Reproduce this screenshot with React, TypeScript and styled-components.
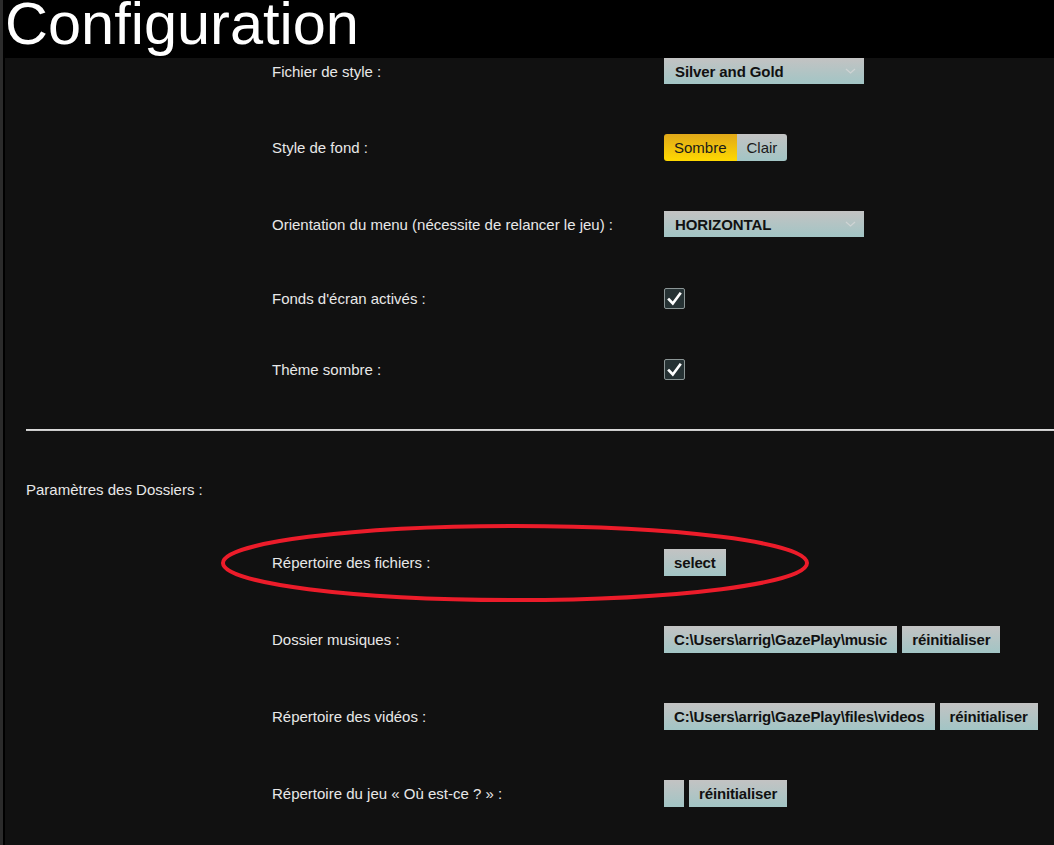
import styled, { createGlobalStyle, css } from "styled-components";

const GlobalStyle = createGlobalStyle`
  html, body {
    margin: 0;
    padding: 0;
    background: #111111;
  }
  body {
    font-family: "Liberation Sans", Arial, sans-serif;
  }
`;

const Page = styled.div`
  display: flex;
  min-height: 845px;
  background: #111111;
`;

const Rail = styled.div`
  width: 3px;
  flex: none;
  background: #2b2b2b;
  border-right: 2px solid #000;
`;

const Main = styled.div`
  flex: 1;
  display: flex;
  flex-direction: column;
  min-width: 0;
`;

const Header = styled.header`
  height: 58px;
  background: #000;
  overflow: hidden;
`;

const Title = styled.h1`
  margin: 0;
  font-size: 59.5px;
  font-weight: 400;
  line-height: 48px;
  color: #ffffff;
`;

const Content = styled.div`
  display: flex;
  flex-direction: column;
  gap: 50px;
  padding: 0 0 40px 21px;
`;

const Row = styled.div`
  position: relative;
  display: flex;
  align-items: center;
  margin-left: 246px;
`;

const Label = styled.div`
  width: 392px;
  flex: none;
  font-size: 15px;
  color: #e8e8e8;
`;

const SectionTitle = styled.div`
  font-size: 15px;
  line-height: 18px;
  color: #e8e8e8;
`;

const Separator = styled.div`
  height: 2px;
  background: linear-gradient(#e2e2e2, #c4c4c4);
`;

const silver = css`
  background: linear-gradient(#c3c3c3, #a2c5c5);
  color: #111;
  font-family: "Liberation Sans", Arial, sans-serif;
  font-size: 15px;
  border: none;
`;

const Combo = styled.div`
  ${silver};
  width: 200px;
  height: 26px;
  box-sizing: border-box;
  padding: 0 8px 0 11px;
  display: flex;
  align-items: center;
  justify-content: space-between;
  font-weight: 700;
  letter-spacing: -0.1px;
`;

const Toggle = styled.div`
  display: flex;
`;

const ToggleButton = styled.button<{ $active?: boolean }>`
  ${silver};
  height: 27px;
  padding: 0 10px;
  font-weight: 400;
  color: #1a1a1a;
  ${(p) =>
    p.$active &&
    css`
      background: linear-gradient(#e0a81a, #ffd900);
    `}
  &:first-child {
    border-radius: 3px 0 0 3px;
  }
  &:last-child {
    border-radius: 0 3px 3px 0;
  }
`;

const Buttons = styled.div`
  display: flex;
  gap: 5px;
`;

const PathButton = styled.button`
  ${silver};
  height: 27px;
  min-width: 20px;
  padding: 0 10px;
  font-weight: 700;
  letter-spacing: -0.15px;
`;

const Check = styled.div`
  width: 21px;
  height: 21px;
  box-sizing: border-box;
  border: 1px solid #8c9696;
  border-radius: 2px;
  background: #263234;
  display: flex;
  align-items: center;
  justify-content: center;
`;

const CheckRow = styled(Row)`
  margin-top: 1px;
  margin-bottom: -1px;
`;

const Ring = styled.svg`
  position: absolute;
  left: -52px;
  top: -26px;
  pointer-events: none;
  overflow: visible;
`;

const Chevron = () => (
  <svg width="11" height="6" viewBox="0 0 11 6">
    <path d="M1 1 L5.5 5 L10 1" fill="none" stroke="#cfd4d4" strokeWidth="1.2" />
  </svg>
);

const CheckBox = () => (
  <Check>
    <svg width="15" height="14" viewBox="0 0 15 14">
      <path
        d="M2 7.5 L5.8 11.5 L13 1.8"
        fill="none"
        stroke="#ffffff"
        strokeWidth="2.6"
        strokeLinecap="square"
      />
    </svg>
  </Check>
);

export default function App() {
  return (
    <>
      <GlobalStyle />
      <Page>
        <Rail />
        <Main>
          <Header>
            <Title>Configuration</Title>
          </Header>
          <Content>
            <Row>
              <Label>Fichier de style :</Label>
              <Combo>
                Silver and Gold
                <Chevron />
              </Combo>
            </Row>
            <Row>
              <Label>Style de fond :</Label>
              <Toggle>
                <ToggleButton $active>Sombre</ToggleButton>
                <ToggleButton>Clair</ToggleButton>
              </Toggle>
            </Row>
            <Row>
              <Label>Orientation du menu (nécessite de relancer le jeu) :</Label>
              <Combo>
                HORIZONTAL
                <Chevron />
              </Combo>
            </Row>
            <CheckRow>
              <Label>Fonds d'écran activés :</Label>
              <CheckBox />
            </CheckRow>
            <CheckRow>
              <Label>Thème sombre :</Label>
              <CheckBox />
            </CheckRow>
            <Separator />
            <SectionTitle>Paramètres des Dossiers :</SectionTitle>
            <Row>
              <Label>Répertoire des fichiers :</Label>
              <Buttons>
                <PathButton>select</PathButton>
              </Buttons>
              <Ring width="590" height="80" viewBox="0 0 590 80">
                <ellipse
                  cx="295"
                  cy="40"
                  rx="292"
                  ry="37"
                  fill="none"
                  stroke="#ec1c2a"
                  strokeWidth="4"
                />
              </Ring>
            </Row>
            <Row>
              <Label>Dossier musiques :</Label>
              <Buttons>
                <PathButton>C:\Users\arrig\GazePlay\music</PathButton>
                <PathButton>réinitialiser</PathButton>
              </Buttons>
            </Row>
            <Row>
              <Label>Répertoire des vidéos :</Label>
              <Buttons>
                <PathButton>C:\Users\arrig\GazePlay\files\videos</PathButton>
                <PathButton>réinitialiser</PathButton>
              </Buttons>
            </Row>
            <Row>
              <Label>Répertoire du jeu « Où est-ce ? » :</Label>
              <Buttons>
                <PathButton />
                <PathButton>réinitialiser</PathButton>
              </Buttons>
            </Row>
          </Content>
        </Main>
      </Page>
    </>
  );
}
